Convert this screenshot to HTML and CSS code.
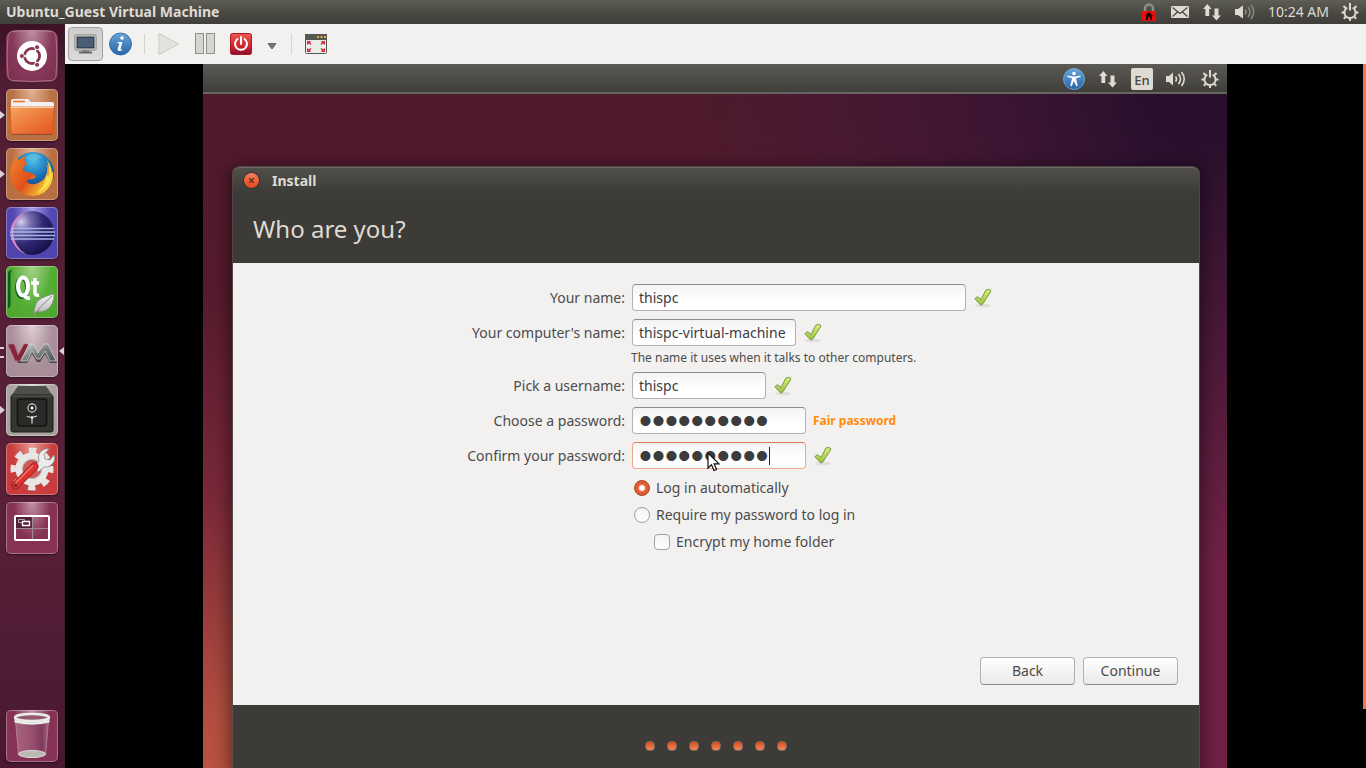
FILE: index.html
```html
<!DOCTYPE html>
<html lang="en">
<head>
<meta charset="utf-8">
<title>Ubuntu_Guest Virtual Machine</title>
<link rel="stylesheet" href="styles.css">
</head>
<body>
<svg class="defs" aria-hidden="true">
  <defs>
    <linearGradient id="g-check" x1="0" y1="0" x2="0" y2="1"><stop offset="0" stop-color="#e0ee74"/><stop offset="1" stop-color="#98bd3c"/></linearGradient>
    <linearGradient id="g-folder" x1="0" y1="0" x2="1" y2="1"><stop offset="0" stop-color="#f6a25c"/><stop offset="1" stop-color="#e2541f"/></linearGradient>
    <radialGradient id="g-globe" cx=".5" cy=".2" r=".8"><stop offset="0" stop-color="#4cc0ea"/><stop offset=".5" stop-color="#1b6fb5"/><stop offset="1" stop-color="#12306c"/></radialGradient>
    <linearGradient id="g-fox" x1="0" y1="0" x2="1" y2=".6"><stop offset="0" stop-color="#f0862c"/><stop offset=".55" stop-color="#e0501c"/><stop offset="1" stop-color="#f7d23a"/></linearGradient>
    <radialGradient id="g-ecl" cx=".25" cy=".25" r=".85"><stop offset="0" stop-color="#d5d0ee"/><stop offset=".25" stop-color="#7a70b2"/><stop offset=".6" stop-color="#2e2670"/><stop offset="1" stop-color="#15104a"/></radialGradient>
    <linearGradient id="g-silver" x1="0" y1="0" x2="0" y2="1"><stop offset="0" stop-color="#f4f4f4"/><stop offset="1" stop-color="#b9b9b9"/></linearGradient>
    <linearGradient id="g-vm" x1="0" y1="0" x2="1" y2="1"><stop offset="0" stop-color="#dde0e0"/><stop offset=".5" stop-color="#7b8080"/><stop offset="1" stop-color="#4c5050"/></linearGradient>
    <linearGradient id="g-blue" x1="0" y1="0" x2="0" y2="1"><stop offset="0" stop-color="#6aa5da"/><stop offset="1" stop-color="#2565a8"/></linearGradient>
    <linearGradient id="g-red" x1="0" y1="0" x2="0" y2="1"><stop offset="0" stop-color="#ec5b55"/><stop offset=".6" stop-color="#d0242c"/><stop offset="1" stop-color="#8c0f33"/></linearGradient>
    <linearGradient id="g-bin" x1="0" y1="0" x2="1" y2="0"><stop offset="0" stop-color="#a8627f"/><stop offset=".5" stop-color="#98506f"/><stop offset=".8" stop-color="#7f3a5c"/><stop offset="1" stop-color="#a8627f"/></linearGradient>
    <symbol id="check" viewBox="0 0 20 20">
      <ellipse cx="10" cy="17.500" rx="8" ry="1.800" fill="#dfdedd"/>
      <path d="M2 10.800Q2.500 9.300 4.700 8.800L8 11.400 12.800 2.200Q15 .8 17.700 2.200L17.500 4 9.900 15.800Q8.500 17.800 7 16.400z" fill="url(#g-check)" stroke="#719c48" stroke-width="1" stroke-linejoin="round"/>
    </symbol>
    <symbol id="net" viewBox="0 0 18 18">
      <path d="M4.300 1L8.600 6H6.200v7H2.400V6H0zM13.500 17.500L9 12.500h2.500v-7h4v7H18z"/>
    </symbol>
    <symbol id="gear" viewBox="0 0 18 18">
      <g fill="none" stroke="currentColor" stroke-width="2">
        <path d="M6.300 4.600a5.600 5.600 0 1 0 5.400 0"/>
        <path d="M9 0v7.500"/>
        <path d="M2.500 3l2 2M15.500 3l-2 2M.5 9.500h2.500M15 9.500h2.500M2.800 15.700l1.700-1.700M15.200 15.700l-1.700-1.700M9 15v3"/>
      </g>
    </symbol>
  </defs>
</svg>

<header class="topbar">
  <h1 class="topbar-title">Ubuntu_Guest Virtual Machine</h1>
  <div class="indicators">
    <svg class="i-lock" viewBox="0 0 14 18"><path d="M3 9V5.500a4 4 0 0 1 8 0V9" fill="none" stroke="#8c8c88" stroke-width="2.500"/><rect y="8" width="14" height="10" rx="1" fill="#ec0b0b"/><path d="M7 9l4 4h-1v4H8v-3H6v3H4v-4H3z" fill="#240000"/></svg>
    <svg class="i-mail" viewBox="0 0 18 14"><rect y="1" width="18" height="12" rx="1" fill="#dfdbd2"/><path d="M1.500 2.500L9 8.500l7.500-6M1.500 11.500L6.500 7M16.500 11.500L11.500 7" fill="none" stroke="#45443f" stroke-width="1.200"/></svg>
    <svg class="i-net"><use href="#net"/></svg>
    <svg class="i-vol" viewBox="0 0 20 16"><path d="M0 5h3l5-3.500v13L3 11H0z"/><g fill="none" stroke="#8a8882" stroke-width="1.600"><path d="M10 5.500q2 2.500 0 5M13 3q4 5 0 10M16 1q5.500 7 0 14"/></g></svg>
    <time>10:24 AM</time>
    <svg class="i-gear"><use href="#gear"/></svg>
  </div>
</header>

<div class="workspace">
  <nav class="launcher" aria-label="Launcher">
    <button class="tile tile-dash" aria-label="Dash"><svg viewBox="0 0 52 52"><path d="M7 1.500Q26-1 45 1.500q5 .5 5 5 2 19.500 0 39 0 4.500-5 5-19 2-38 0-5-.5-5-5-2-19.500 0-39 0-4.500 5-5z" fill="none" stroke="#c08aa0" stroke-opacity=".7"/><circle cx="26" cy="26" r="15" fill="#fff"/><circle cx="26" cy="26" r="7.500" fill="none" stroke="#863852" stroke-width="3"/><path d="M26 26l-12 0M26 26l6-10.400M26 26l6 10.400" stroke="#fff" stroke-width="1.500"/><circle cx="26" cy="26" r="6" fill="#fff"/><g fill="#863852" stroke="#fff" stroke-width="1"><circle cx="15.900" cy="26" r="2.500"/><circle cx="31.100" cy="17.200" r="2.500"/><circle cx="31.100" cy="34.800" r="2.500"/></g></svg></button>
    <button class="tile tile-orange run" aria-label="Files"><svg viewBox="0 0 52 52"><path d="M5 12q0-2 2-2h15l3 3h21q2 0 2 2v6H5z" fill="#f3f2f0"/><path d="M7 12.500h12" stroke="#eb7f3a" stroke-width="1.800"/><path d="M4 18h44l-1 27H5z" fill="url(#g-folder)" stroke="#d8501c" stroke-width=".8"/><path d="M4.500 18.500h43" stroke="#fbd3a8"/><path d="M6 45.500h40" stroke="#8c5530"/></svg></button>
    <button class="tile tile-orange run" aria-label="Firefox"><svg viewBox="0 0 52 52"><circle cx="27" cy="25" r="21" fill="url(#g-globe)"/><path d="M24 6q8-2 12 4-4 0-6 3-4-3-9-1l-1-3z" fill="#6cc8e8" opacity=".5"/><path d="M9 9q2 1 4 3 3-3 7-4-3 4 0 6l1 3q-4 0-4 4 0 2 4 3 4 0 8 3 2 3-3 4-6 0-5 3 4 4 11 1 8-3 9-11 1-4-1-8 5 5 5 10l2-3q1 7-2 13-6 12-19 12Q12 47 6.500 36 1 23 9 9z" fill="url(#g-fox)"/><path d="M41 12q7 9 4 20-5 10-14 13 9-8 9-18l3 2q1-8-2-17z" fill="#fbe64a" opacity=".9"/></svg></button>
    <button class="tile tile-indigo" aria-label="Eclipse"><svg viewBox="0 0 52 52"><circle cx="26" cy="26" r="22" fill="url(#g-ecl)"/><path d="M20 5a22 22 0 0 0 0 42A24 24 0 0 1 20 5z" fill="#d486c5"/><path d="M5 21.500h43M4 25h45M4 28.500h45M5 32h43" stroke="#a5b8e8" stroke-width="1.300"/></svg></button>
    <button class="tile tile-green" aria-label="Qt"><svg viewBox="0 0 52 52"><path d="M2 43V8q0-4 4-4L4.500 7v33z" fill="#0b5c2a"/><g fill="none" stroke="#175f26" stroke-width="4"><ellipse cx="16" cy="21.500" rx="5" ry="9.500"/></g><g fill="none" stroke="#fff" stroke-width="4"><ellipse cx="17" cy="20.500" rx="5" ry="9"/><path d="M18 28q1 5 6 4M29 12v15q0 3 4 2M25 17h8" stroke-width="3.400"/></g><path d="M28 48q0-12 8-16 6-3 12-4 0 10-6 15-5 4-11 2z" fill="url(#g-silver)" stroke="#888" stroke-width=".7"/><path d="M28 49q7-10 18-19" fill="none" stroke="#888"/></svg></button>
    <button class="tile tile-grey run double current" aria-label="VMware"><svg viewBox="0 0 52 52"><path d="M2 21h7l4 11 6-11h7l6 8 5-8h6l8 17h-7l-5-9-5 8h-3l-5-8-5 9h-9z" fill="#303334" opacity=".8"/><path d="M2 19h6l4 11 6-11h6L14 36H9z" fill="#85253c" stroke="#c37888" stroke-width=".6"/><path d="M15 36l8-17h5l4 9 6-9h4l8 17h-6l-5-10-5 8h-3l-5-8-5 10z" fill="url(#g-vm)" stroke="#d5d6d6" stroke-width=".8"/></svg></button>
    <button class="tile tile-stone run" aria-label="Safe"><svg viewBox="0 0 52 52"><path d="M12 2h28l7 10H5z" fill="#4f504b"/><rect x="5" y="11" width="42" height="37" rx="2" fill="#343632" stroke="#1c1d1b"/><path d="M6 12h40" stroke="#5c5e59"/><rect x="11.500" y="15" width="29" height="27" rx="2" fill="#292b28" stroke="#141513" stroke-width="1.500"/><circle cx="26" cy="24" r="4" fill="#111" stroke="#bcbdb8" stroke-width="1.400"/><circle cx="26" cy="24" r="1.700" fill="#eee"/><path d="M26 33.500v6M26 33.500l-5-1M26 33.500l5-1.500" stroke="#ddd" stroke-width="1.200"/><circle cx="26" cy="33.500" r="1.300" fill="#fff"/></svg></button>
    <button class="tile tile-red" aria-label="System Settings"><svg viewBox="0 0 52 52"><circle cx="26" cy="26" r="18.500" fill="none" stroke="#e6e4e2" stroke-width="6" stroke-dasharray="7.265 7.265" stroke-dashoffset="3.600"/><circle cx="26" cy="26" r="13" fill="#cc5a58" stroke="#e9e7e5" stroke-width="7"/><circle cx="26" cy="26" r="9.700" fill="none" stroke="#bdb9b7"/><path d="M29 23l4-5q-2-8 4-11 3-2 6-1l-5 5 1 5 5 1 4-5q2 6-3 10-3 3-7 2l-6 5z" fill="#eceeed" stroke="#8b8f8d" stroke-width=".8"/><path d="M9.500 42.500L28.500 23.500" stroke="#941a1b" stroke-width="8" stroke-linecap="round"/><path d="M9.500 42.500L28.500 23.500" stroke="#dd3431" stroke-width="6.500" stroke-linecap="round"/><path d="M9.500 40L27 22.500" stroke="#f37b74" stroke-width="1.300"/><circle cx="9.500" cy="42.500" r="1.700" fill="#7e3220"/></svg></button>
    <button class="tile tile-plum" aria-label="Workspace Switcher"><svg viewBox="0 0 52 52"><path d="M9 14h17v12H9z" fill="#532039"/><path d="M26.500 14v24M9 26.500h34" stroke="#9b8a8f" stroke-width="1.200"/><rect x="9" y="14" width="34" height="24" rx="1" fill="none" stroke="#fff" stroke-width="2"/><path d="M12.500 17.500h6v3h-6z" fill="none" stroke="#aaa"/><path d="M16.500 19.500h7v4h-7z" fill="#532039" stroke="#fff" stroke-width="1.300"/></svg></button>
    <button class="tile tile-plum tile-trash" aria-label="Trash"><svg viewBox="0 0 52 52"><path d="M9.500 11h33l-3 34q-13 5-27 0z" fill="url(#g-bin)" stroke="#b98aa0" stroke-width=".8"/><ellipse cx="26" cy="44" rx="13.500" ry="3.500" fill="#b9bab4" stroke="#dad9d5"/><path d="M8 8h36l-1 5q-17 3.500-34 0z" fill="#c4c4c1"/><path d="M8.500 11q17.500 5 35 0" fill="none" stroke="#f2f2f0" stroke-width="1.500"/><ellipse cx="26" cy="7.500" rx="17" ry="3.500" fill="#935a72" stroke="#ececea" stroke-width="2.500"/></svg></button>
  </nav>

  <main class="vm">
    <div class="toolbar" role="toolbar" aria-label="Virtual machine">
      <button class="tool tool-active" aria-label="Show console"><svg width="24" height="22" viewBox="0 0 24 22"><rect x="1" y="2" width="21" height="15" rx="1" fill="#f4f4f2" stroke="#777975"/><rect x="3" y="4" width="17" height="11" fill="#4c5e76" stroke="#1d2836"/><path d="M8 17h7v2H8z" fill="#888"/><path d="M5 19.500h13" stroke="#666" stroke-width="2"/></svg></button>
      <button class="tool" aria-label="Details"><svg width="24" height="24" viewBox="0 0 24 24"><circle cx="11.500" cy="12" r="11" fill="url(#g-blue)" stroke="#2a6095" stroke-width=".8"/><circle cx="13" cy="6" r="1.800" fill="#fff"/><path d="M8.500 10h5l-2 7q0 1 2 0l-.5 1.200q-5 2.300-4.300-1.200l1.800-5.800h-2z" fill="#fff"/></svg></button>
      <span class="sep"></span>
      <button class="tool" aria-label="Run" disabled><svg width="24" height="24" viewBox="0 0 24 24"><path d="M2 1.500L22 12 2 22.500z" fill="#e2e2df" stroke="#cbcbc7"/></svg></button>
      <button class="tool" aria-label="Pause"><svg width="24" height="24" viewBox="0 0 24 24"><g fill="#d4d7d1" stroke="#8d908a"><rect x="2.500" y="1.500" width="8" height="20"/><rect x="13.500" y="1.500" width="8" height="20"/></g></svg></button>
      <button class="tool" aria-label="Shut down"><svg width="24" height="24" viewBox="0 0 24 24"><rect x="1.500" y="1.500" width="21" height="21" rx="2" fill="url(#g-red)" stroke="#a81923"/><path d="M8.500 7a6 6 0 1 0 7 0M12 5v7" fill="none" stroke="#fff" stroke-width="2" stroke-linecap="round"/></svg></button>
      <button class="tool tool-more" aria-label="Shutdown menu"><svg width="10" height="8" viewBox="0 0 10 8"><path d="M1 1.500h8L5 7z" fill="#777" stroke="#555" stroke-width=".8"/></svg></button>
      <span class="sep sep-last"></span>
      <button class="tool" aria-label="Full screen"><svg width="24" height="22" viewBox="0 0 24 22"><rect x="1.500" y="1.500" width="21" height="19" rx="1" fill="#ecedeb" stroke="#555753"/><path d="M1 1h22v6H1z" fill="#555753"/><path d="M13 3h2v2h-2zM16.500 3h2v2h-2zM20 3h2v2h-2z" fill="#e2b04a"/><g fill="#cf2f3c"><path d="M3 8h4L6 9.500l1.500 1.500L6.500 12 5 10.500 3 12zM21 8h-4l1 1.500-1.500 1.500 1 1 1.500-1.500 2 1.500zM3 19h4l-1-1.500L7.500 16l-1-1L5 16.500 3 15zM21 19h-4l1-1.500-1.500-1.500 1-1 1.500 1.500 2-1.500z"/></g></svg></button>
    </div>

    <div class="screen">
      <div class="guest">
        <div class="guest-panel">
          <svg class="i-access" viewBox="0 0 22 22"><circle cx="11" cy="11" r="10.500" fill="url(#g-blue)" stroke="#79aedb" stroke-width=".8"/><circle cx="11" cy="5.500" r="1.800" fill="#fff"/><path d="M4.500 7.500l5 1h3l5-1v1.600l-4.500 1.200 1.700 7.700-1.400.3L11 13l-2.300 5.300-1.400-.3L9 10.300 4.500 9.100z" fill="#fff"/></svg>
          <svg class="i-net"><use href="#net"/></svg>
          <span class="lang">En</span>
          <svg class="i-vol" viewBox="0 0 20 16"><path d="M0 5h3l4-3.500v13L3 11H0z"/><g fill="none" stroke="currentColor" stroke-width="1.600"><path d="M9.500 5.500q2 2.500 0 5M12.500 3q4 5 0 10M15.500 1q5.500 7 0 14"/></g></svg>
          <svg class="i-gear"><use href="#gear"/></svg>
        </div>
        <div class="desktop">
          <section class="window" aria-label="Install">
            <div class="titlebar">
              <button class="close" aria-label="Close"><svg viewBox="0 0 16 16"><path d="M5.500 5.500l5 5M10.500 5.500l-5 5" stroke="#5b2412" stroke-width="1.400"/></svg></button>
              <span>Install</span>
            </div>
            <h2>Who are you?</h2>
            <form class="content">
              <div class="row"><label for="name">Your name:</label><input class="field field-name" id="name" type="text" value="thispc"><svg class="check"><use href="#check"/></svg></div>
              <div class="row"><label for="host">Your computer's name:</label><input class="field field-host" id="host" type="text" value="thispc-virtual-machine"><svg class="check"><use href="#check"/></svg></div>
              <p class="hint">The name it uses when it talks to other computers.</p>
              <div class="row"><label for="user">Pick a username:</label><input class="field field-user" id="user" type="text" value="thispc"><svg class="check"><use href="#check"/></svg></div>
              <div class="row"><label for="pass">Choose a password:</label><input class="field field-pass" id="pass" type="password" value="thispc1234"><strong class="strength">Fair password</strong></div>
              <div class="row"><label for="confirm">Confirm your password:</label><span class="pass-wrap"><input class="field field-pass field-focus" id="confirm" type="password" value="thispc1234"><i class="caret"></i><svg class="pointer" viewBox="0 0 13 20"><path d="M1 1v15l3.500-3.300L7 18.500l2.500-1-2.400-5.700H12z" fill="#fff" stroke="#111" stroke-width="1.200"/></svg></span><svg class="check"><use href="#check"/></svg></div>
              <div class="options">
                <label><input type="radio" name="login" checked>Log in automatically</label>
                <label><input type="radio" name="login">Require my password to log in</label>
                <label class="indent"><input type="checkbox">Encrypt my home folder</label>
              </div>
              <div class="actions"><button type="button">Back</button><button type="button">Continue</button></div>
            </form>
            <div class="steps"><i></i><i></i><i></i><i></i><i></i><i></i><i></i></div>
          </section>
        </div>
      </div>
      <div class="edge"></div>
    </div>
  </main>
</div>
</body>
</html>
```

FILE: styles.css
```css
* { box-sizing: border-box; }
html, body { height: 100%; }
body {
  margin: 0;
  display: flex;
  flex-direction: column;
  overflow: hidden;
  background: #000;
  color: #4c4c4c;
  font: 14px/20px "Noto Sans", "Open Sans", sans-serif;
}
button { margin: 0; padding: 0; border: 0; background: none; font: inherit; color: inherit; }
svg { display: block; flex: none; }
.defs { position: absolute; width: 0; height: 0; }

.topbar {
  flex: none;
  height: 24px;
  display: flex;
  align-items: center;
  justify-content: space-between;
  padding: 0 7px 0 6px;
  background: linear-gradient(#5f5e55, #4a4943 50%, #3f3e3a);
  color: #dfdbd2;
}
.topbar-title { margin: 0; font-size: 14px; font-weight: 700; }
.indicators { display: flex; align-items: center; fill: currentColor; }
.i-lock { width: 14px; height: 18px; margin-right: 15px; }
.i-mail { width: 18px; height: 14px; margin-right: 14px; }
.i-net { width: 18px; height: 18px; }
.i-vol { width: 20px; height: 16px; }
.i-gear { width: 18px; height: 18px; }
.topbar .i-net { margin-right: 14px; }
.topbar .i-vol { margin-right: 13px; }
.topbar time { margin-right: 12px; }

.workspace { flex: 1; min-height: 0; display: flex; }

.launcher {
  flex: none;
  width: 65px;
  display: flex;
  flex-direction: column;
  gap: 7px;
  padding: 6px;
  background: linear-gradient(#3c1226, #501d34 8%, #5a2139 60%, #4a1832);
  border-right: 1px solid #38202c;
}
.tile {
  position: relative;
  width: 52px;
  height: 52px;
  border-radius: 5px;
  box-shadow: inset 0 0 0 1px rgba(255, 255, 255, .3), 0 1px 2px rgba(0, 0, 0, .5);
}
.tile svg { width: 52px; height: 52px; }
.tile-dash { border-radius: 9px; box-shadow: none; background: radial-gradient(at 50% 0, #bd91a2, #86395a 55%, #7a2c4c); }
.tile-orange { background: radial-gradient(at 50% 0, #e2b493, #b96f45 55%, #b8703e); }
.tile-indigo { background: radial-gradient(at 50% 0, #a8a0e6, #5549b4 50%, #4c42aa); }
.tile-green { background: radial-gradient(at 50% 0, #a4d38a, #55ad35 55%, #4da42c); }
.tile-grey { background: radial-gradient(at 50% 0, #e0d0d6, #aa909b 55%, #a58c97); }
.tile-stone { background: radial-gradient(at 50% 0, #d9d6d2, #aaa5a0 55%, #a5a09b); }
.tile-red { background: radial-gradient(at 50% 0, #e69a94, #c93f3f 55%, #c93a3d); }
.tile-plum { background: radial-gradient(at 50% 0, #c290a7, #853153 50%, #8a3557); }
.tile-trash { margin-top: auto; }
.run::before {
  content: "";
  position: absolute;
  left: -6px;
  top: 22px;
  border: 4px solid transparent;
  border-left: 5px solid #d8d2d5;
  border-right: 0;
}
.double::before { top: 22px; width: 4px; height: 7px; border: solid #d8d2d5; border-width: 2px 0; }
.current::after {
  content: "";
  position: absolute;
  right: -6px;
  top: 22px;
  border: 4px solid transparent;
  border-right: 5px solid #d8d2d5;
  border-left: 0;
}

.vm { flex: 1; min-width: 0; display: flex; flex-direction: column; }
.toolbar {
  flex: none;
  height: 40px;
  display: flex;
  align-items: center;
  padding: 0 3px;
  background: #f2f1f0;
}
.tool { display: flex; align-items: center; justify-content: center; width: 36px; height: 34px; }
.tool-active {
  width: 35px;
  border: 1px solid #a3a19f;
  border-radius: 4px;
  background: linear-gradient(#cfcdcb, #dddbda);
}
.tool-more { width: 26px; padding-top: 3px; }
.sep { width: 1px; height: 20px; background: #d6d4d2; margin: 0 6px 0 5px; }
.sep-last { margin-left: 6px; }

.screen { flex: 1; min-height: 0; display: flex; background: #000; padding-left: 138px; }
.edge { flex: none; width: 3px; margin: 0 0 59px 136px; background: #f07746; }
.guest { flex: 1; min-width: 0; display: flex; flex-direction: column; overflow: hidden; }
.guest-panel {
  flex: none;
  height: 30px;
  display: flex;
  align-items: center;
  justify-content: flex-end;
  padding: 2px 8px 0 0;
  background: linear-gradient(#5c5a55, #3f3e3a);
  border-bottom: 2px solid #67655f;
  color: #dfdbd2;
  fill: currentColor;
}
.i-access { width: 22px; height: 22px; margin-right: 14px; }
.guest-panel .i-net { margin-right: 14px; }
.lang {
  width: 22px;
  height: 22px;
  margin-right: 13px;
  padding-top: 3px;
  border-radius: 2px;
  background: #dfdbd2;
  color: #4a4944;
  font-weight: 500;
  font-size: 13px;
  line-height: 18px;
  text-align: center;
}
.guest-panel .i-vol { margin-right: 15px; }

.desktop {
  flex: 1;
  min-height: 0;
  display: flex;
  padding: 73px 28px 0 30px;
  background:
    radial-gradient(ellipse 50% 70% at 97% 0, #28102c 10%, rgba(40, 16, 44, 0)),
    linear-gradient(to right, rgba(111, 33, 69, 0) 50%, #6f2145 90%),
    linear-gradient(#4f1a2c, #551b2d 30%, #7a2838 60%, #b24e3f 92%, #b9523f);
}
.window {
  flex: 1;
  min-width: 0;
  display: flex;
  flex-direction: column;
  border-radius: 7px 7px 0 0;
  background: #3c3b37;
  box-shadow: 0 0 0 1px rgba(90, 84, 80, .8), 0 4px 16px 4px rgba(0, 0, 0, .45);
}
.titlebar {
  flex: none;
  height: 26px;
  display: flex;
  align-items: center;
  gap: 13px;
  padding-left: 11px;
  border-top: 1px solid #6b6962;
  border-radius: 7px 7px 0 0;
  background: linear-gradient(#504f49, #3c3b37);
  color: #dfdbd2;
  font-weight: 700;
}
.close { width: 15px; height: 15px; border-radius: 50%; background: linear-gradient(#f4805c, #e0481b); box-shadow: 0 0 0 1px #35332f; }
.close svg { width: 15px; height: 15px; }
.window h2 {
  flex: none;
  margin: 0;
  padding: 19px 20px 18px;
  color: #dfdbd2;
  font-size: 24px;
  line-height: 33px;
  font-weight: 400;
}
.content {
  flex: none;
  display: flex;
  flex-direction: column;
  min-height: 442px;
  padding: 21px 21px 20px 0;
  background: #f2f1f0;
}
.row { display: flex; align-items: center; height: 27px; margin-bottom: 8px; }
.row > label { width: 392px; margin-right: 7px; text-align: right; }
.field {
  display: block;
  height: 27px;
  padding: 0 6px;
  border: 1px solid #b4b2b0;
  border-top-color: #8e8c8a;
  border-radius: 4px;
  background: linear-gradient(#f3f3f3, #fff 60%);
  color: #3c3c3c;
  font: 14px/25px "Noto Sans", "Open Sans", sans-serif;
  outline: 0;
}
.field-name { width: 334px; }
.field-host { width: 164px; }
.field-user { width: 134px; }
.field-pass { width: 174px; font: 37px/25px "Liberation Sans", sans-serif; }
.field-focus { border-color: #eda58c; border-top-color: #dd7b59; }
.check { width: 20px; height: 20px; margin-left: 7px; }
.hint { margin: -4px 0 6px 398px; font-size: 12px; line-height: 16px; }
.strength { margin-left: 7px; color: #ff8c0a; font-size: 12px; }
.pass-wrap { position: relative; }
.caret { position: absolute; left: 137px; top: 5px; width: 1px; height: 18px; background: #222; }
.pointer { position: absolute; left: 75px; top: 10px; width: 13px; height: 20px; }
.options { display: flex; flex-direction: column; gap: 7px; margin: 1px 0 0 401px; }
.options label { display: flex; align-items: center; }
.options .indent { margin-left: 20px; }
.options input {
  appearance: none;
  width: 16px;
  height: 16px;
  margin: 0 6px 0 0;
  border: 1px solid #a2a09e;
  background: linear-gradient(#f3f3f3, #fff);
}
.options input[type="radio"] { border-radius: 50%; }
.options input[type="checkbox"] { border-radius: 4px; }
.options input:checked {
  border-color: #a94522;
  background: radial-gradient(circle, #fff 0 2px, #dd5f32 4px);
}
.actions { display: flex; justify-content: flex-end; gap: 8px; margin-top: auto; }
.actions button {
  width: 95px;
  height: 28px;
  border: 1px solid #b3b1af;
  border-bottom-color: #8f8d8b;
  border-radius: 4px;
  background: linear-gradient(#fff, #ebeae9);
}
.steps { flex: 1; display: flex; justify-content: center; gap: 12px; padding-top: 36px; }
.steps i {
  width: 10px;
  height: 10px;
  border: 1px solid #77675d;
  border-radius: 4px;
  background: linear-gradient(#dd4814, #f08a62);
}
```
